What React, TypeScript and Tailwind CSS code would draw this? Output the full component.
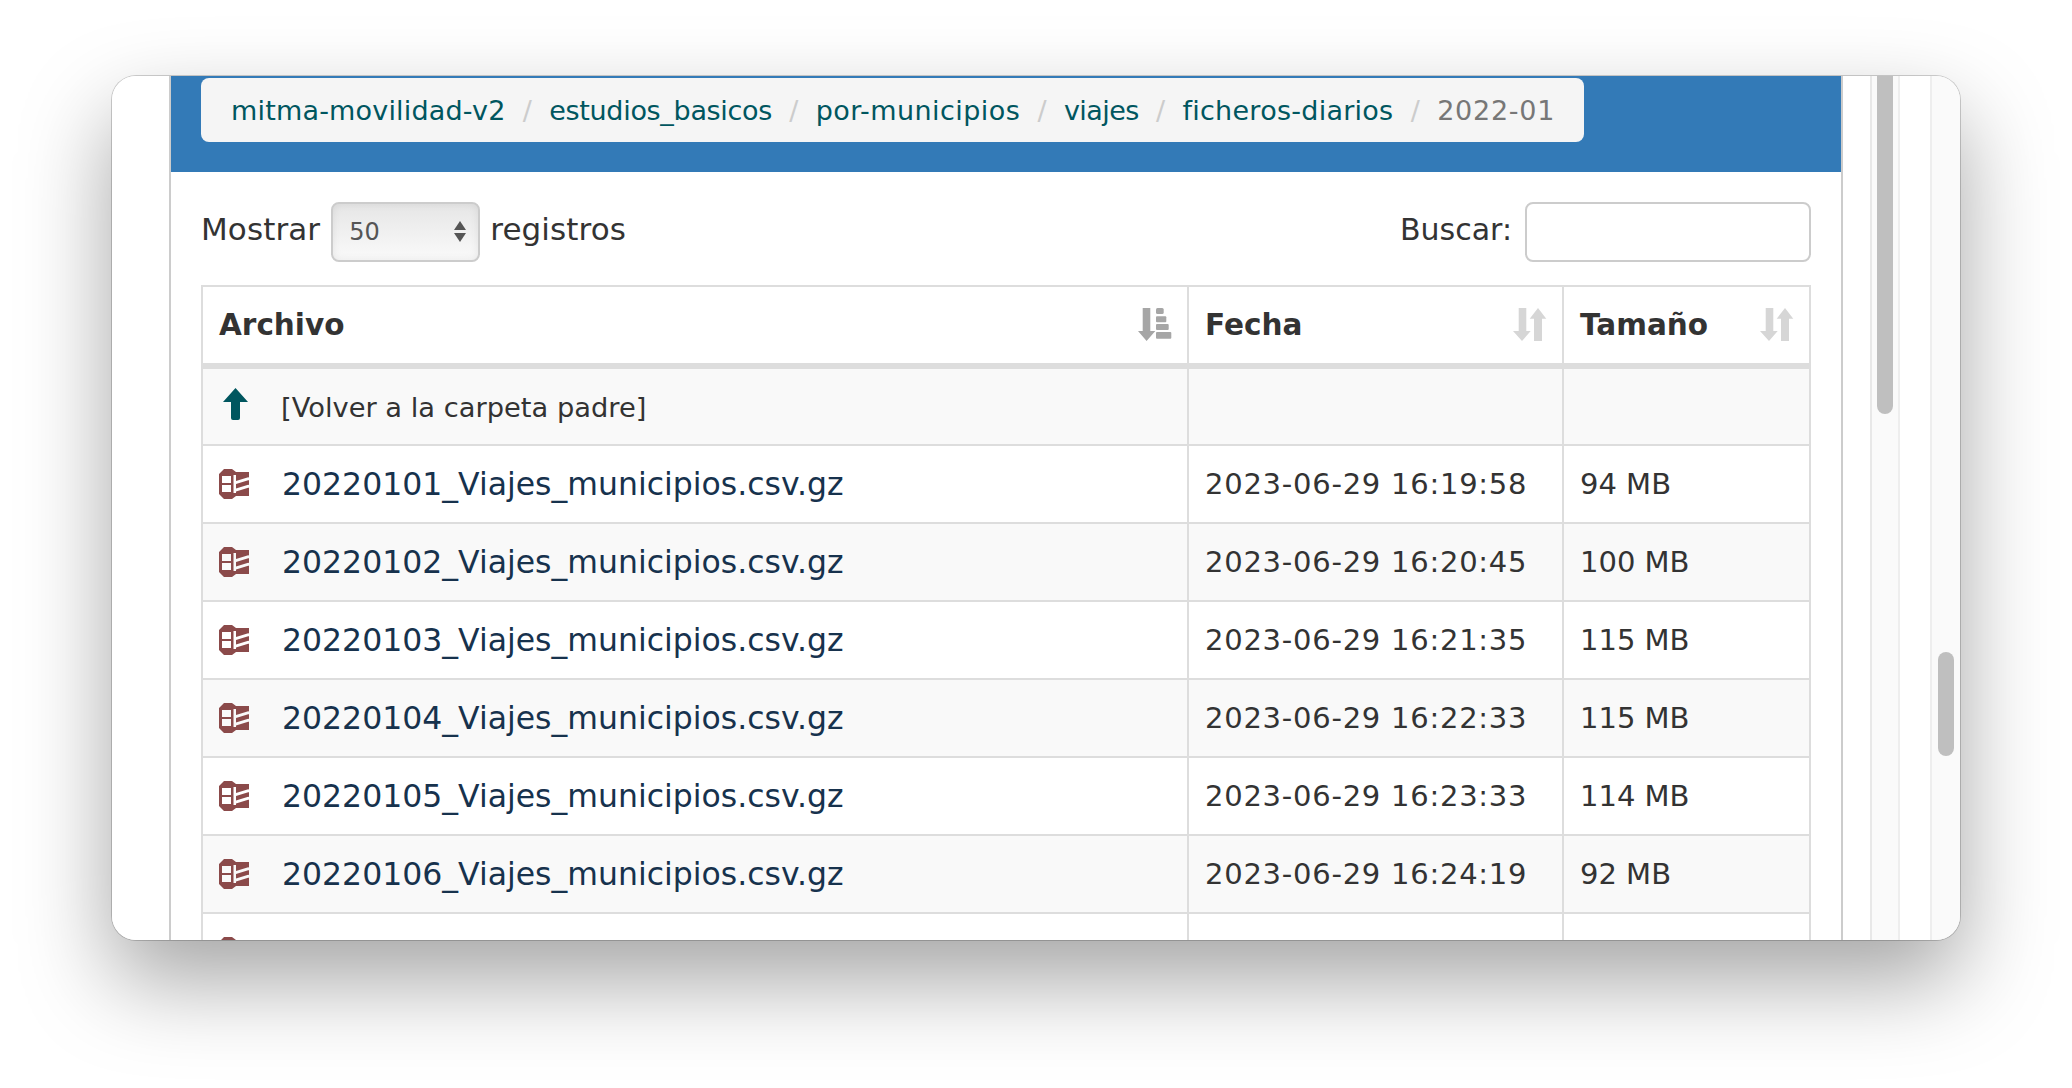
import React from "react";

const FONT = "font-['DejaVu_Sans',_'Liberation_Sans',_sans-serif]";

const rows = [
  { name: "20220101_Viajes_municipios.csv.gz", date: "2023-06-29 16:19:58", size: "94 MB" },
  { name: "20220102_Viajes_municipios.csv.gz", date: "2023-06-29 16:20:45", size: "100 MB" },
  { name: "20220103_Viajes_municipios.csv.gz", date: "2023-06-29 16:21:35", size: "115 MB" },
  { name: "20220104_Viajes_municipios.csv.gz", date: "2023-06-29 16:22:33", size: "115 MB" },
  { name: "20220105_Viajes_municipios.csv.gz", date: "2023-06-29 16:23:33", size: "114 MB" },
  { name: "20220106_Viajes_municipios.csv.gz", date: "2023-06-29 16:24:19", size: "92 MB" },
];

const crumbs = [
  { label: "mitma-movilidad-v2", track: "tracking-[0.18px]" },
  { label: "estudios_basicos", track: "tracking-[-0.31px]" },
  { label: "por-municipios", track: "tracking-[0.43px]" },
  { label: "viajes", track: "tracking-[-0.55px]" },
  { label: "ficheros-diarios", track: "tracking-[0.26px]" },
];

// compressed file glyph, panes and stripes are cut out of the silhouette
const ZipIcon = () => (
  <svg viewBox="0 0 30 30" className="w-[30px] h-[30px] shrink-0" fill="#8b4a4a" fillRule="evenodd">
    <path d="M5 0H13L17 3H30V27H17L13 30H5L0 25V5Z M3 7H12V14H3Z M3 16H12V23H3Z M14.500 6H17V12L30 8V11L17 15V19.500L30 15.500V18.500L17 22.500V24H14.500Z" />
  </svg>
);

const UpIcon = () => (
  <svg viewBox="0 0 25 32" className="w-[25px] h-[32px] mb-[5px] shrink-0" fill="#00565f">
    <path d="M12.500 0L25 14H17v16a2 2 0 0 1-2 2h-5a2 2 0 0 1-2-2V14H0z" />
  </svg>
);

const SortAttr = () => (
  <svg viewBox="0 0 34 34" className="w-[34px] h-[34px]" fill="#a6a6a6">
    <path d="M4.700 0h7.600v23H17.300L8.600 33 0 23h4.700z" />
    <rect x="18" y="0" width="7.700" height="6" rx="1.500" />
    <rect x="18" y="8.300" width="10.300" height="6" rx="1" />
    <rect x="18" y="16" width="12.700" height="6" rx="1" />
    <rect x="18" y="24" width="15.300" height="6.700" rx="1" />
  </svg>
);

const SortBoth = () => (
  <svg viewBox="0 0 34 34" className="w-[34px] h-[34px]" fill="#d6d6d6">
    <path d="M5.700 0h7.600v23H17.700L9 33 0 23h5.700z" />
    <path d="M25 0l8.300 10.700H29V33h-8V10.700h-4.300z" />
  </svg>
);

function Th({ label, width, icon }: { label: string; width: string; icon: React.ReactNode }) {
  return (
    <th className={`${width} border-2 border-[#ddd] border-b-[6px] p-0 text-left font-bold`}>
      <div className="flex items-center justify-between h-[76px] pl-[16px] pr-[15px]">
        <span className="text-[29.500px] text-[#333]">{label}</span>
        {icon}
      </div>
    </th>
  );
}

export default function App() {
  return (
    <div className={`w-[2072px] h-[1088px] bg-white pt-[76px] pl-[112px] overflow-hidden ${FONT}`}>
      <div className="relative w-[1848px] h-[864px] rounded-[24px] overflow-hidden bg-white flex shadow-[0_40px_90px_rgba(0,0,0,0.36),0_0_0_1px_rgba(0,0,0,0.18)]">
        {/* left gutter */}
        <div className="w-[57px] shrink-0 bg-white" />

        {/* main panel */}
        <div className="w-[1674px] shrink-0 border-x-2 border-[#ccc]">
          <div className="h-[96px] bg-[#337ab7] pl-[30px] pt-[2px]">
            <div className="inline-flex items-center h-[64px] pl-[30px] pr-[29px] pt-[2px] rounded-[8px] bg-[#f5f5f5] text-[27px]">
              {crumbs.map((c) => (
                <React.Fragment key={c.label}>
                  <a className={`text-[#00565f] ${c.track}`}>{c.label}</a>
                  <span className="px-[17.300px] text-[#ccc]">/</span>
                </React.Fragment>
              ))}
              <span className="text-[#777] tracking-[0.75px]">2022-01</span>
            </div>
          </div>

          <div className="px-[30px]">
            <div className="flex items-center justify-between pt-[30px] h-[113px] pb-[23px] text-[31px] text-[#333]">
              <div className="flex items-center">
                <span className="mb-[6px] tracking-[0.1px]">Mostrar</span>
                <div className="relative w-[149px] h-[60px] ml-[11px] mr-[10px] rounded-[8px] border-2 border-[#ccc] bg-gradient-to-b from-[#e6e6e6] to-[#fafafa] shadow-[inset_0_0_8px_rgba(0,0,0,0.08)] pl-[16px] flex items-center text-[24px] text-[#555]">
                  50
                  <span className="absolute right-[12px] top-[17px] flex flex-col gap-[3px]">
                    <span className="w-0 h-0 border-x-[6px] border-x-transparent border-b-[9px] border-b-[#555]" />
                    <span className="w-0 h-0 border-x-[6px] border-x-transparent border-t-[9px] border-t-[#555]" />
                  </span>
                </div>
                <span className="mb-[6px] tracking-[0.1px]">registros</span>
              </div>
              <div className="flex items-center gap-[13px]">
                <span className="mb-[6px] text-[30px]">Buscar:</span>
                <input className="w-[286px] h-[60px] rounded-[8px] border-2 border-[#ccc] bg-white" />
              </div>
            </div>

            <table className="w-[1610px] table-fixed border-collapse">
              <thead>
                <tr>
                  <Th label="Archivo" width="w-[986px]" icon={<SortAttr />} />
                  <Th label="Fecha" width="w-[375px]" icon={<SortBoth />} />
                  <Th label="Tamaño" width="w-[247px]" icon={<SortBoth />} />
                </tr>
              </thead>
              <tbody>
                <tr className="bg-[#f9f9f9] h-[79px]">
                  <td className="border-2 border-[#ddd] p-0">
                    <div className="flex items-center pl-[20px]">
                      <UpIcon />
                      <span className="ml-[33px] mt-[4px] text-[27.300px] text-[#333]">[Volver a la carpeta padre]</span>
                    </div>
                  </td>
                  <td className="border-2 border-[#ddd]" />
                  <td className="border-2 border-[#ddd]" />
                </tr>
                {rows.map((r, i) => (
                  <tr key={r.name} className={`h-[78px] ${i % 2 === 0 ? "bg-white" : "bg-[#f9f9f9]"}`}>
                    <td className="border-2 border-[#ddd] p-0">
                      <div className="flex items-center pl-[16px]">
                        <ZipIcon />
                        <a className="ml-[33px] mt-[2px] text-[31.500px] text-[#17324d]">{r.name}</a>
                      </div>
                    </td>
                    <td className="border-2 border-[#ddd] pl-[16px] pt-[2px] text-[29px] tracking-[0.75px] text-[#333]">{r.date}</td>
                    <td className="border-2 border-[#ddd] pl-[16px] pt-[2px] text-[29px] text-[#333]">{r.size}</td>
                  </tr>
                ))}
                {/* next row is cut by the window, only the top of its icon shows */}
                <tr className="h-[78px] bg-white">
                  <td className="border-2 border-[#ddd] p-0">
                    <div className="flex items-center pl-[16px]">
                      <ZipIcon />
                    </div>
                  </td>
                  <td className="border-2 border-[#ddd]" />
                  <td className="border-2 border-[#ddd]" />
                </tr>
              </tbody>
            </table>
          </div>
        </div>

        {/* scrollbars and the empty columns beside them */}
        <div className="w-[29px] shrink-0 bg-white border-r-2 border-[#e8e8e8]" />
        <div className="w-[28px] shrink-0 bg-[#fafafa] border-r-2 border-[#eee] px-[5px]">
          <div className="h-[338px] w-[16px] rounded-b-[8px] bg-[#bfbfbf]" />
        </div>
        <div className="w-[32px] shrink-0 bg-white border-r-2 border-[#eee]" />
        <div className="w-[28px] shrink-0 bg-[#fafafa] pl-[6px] pt-[576px]">
          <div className="h-[104px] w-[16px] rounded-[8px] bg-[#bfbfbf]" />
        </div>
      </div>
    </div>
  );
}
